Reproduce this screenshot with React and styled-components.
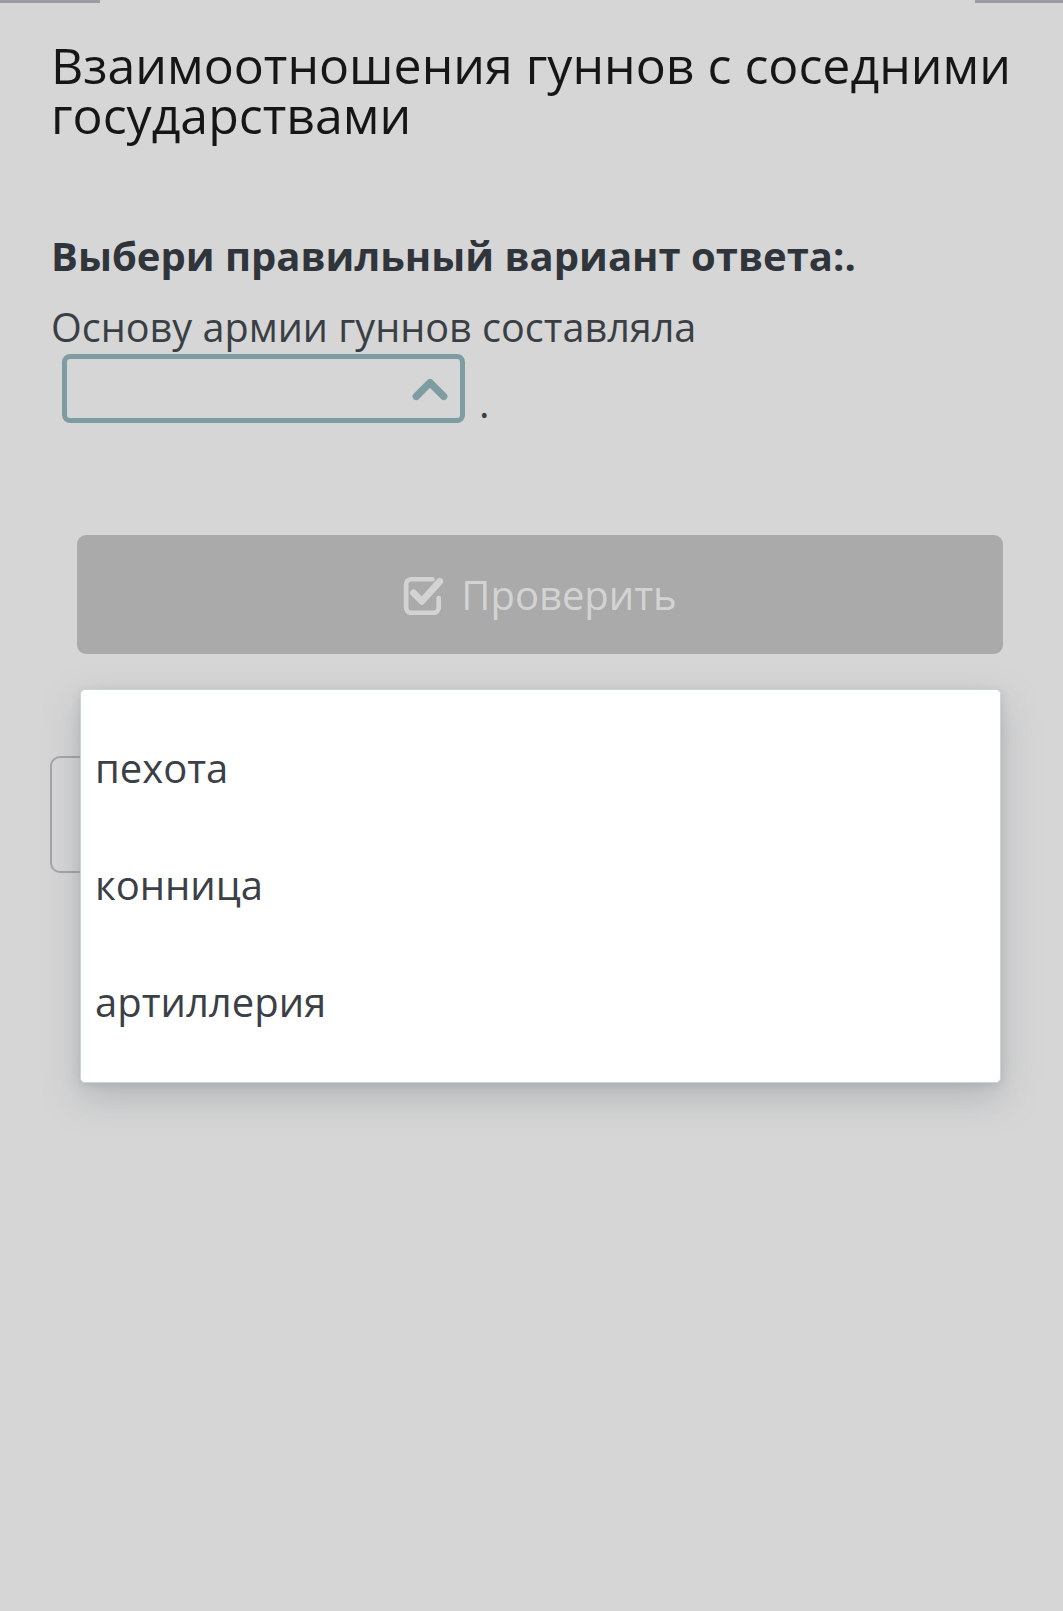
import React from "react";
import styled, { createGlobalStyle } from "styled-components";

const Global = createGlobalStyle`
  html, body { margin: 0; padding: 0; background: #d6d6d6; }
  body { font-family: "Open Sans", "Noto Sans", sans-serif; }
  * { box-sizing: border-box; }
`;

const Page = styled.div`
  position: relative;
  width: 1063px;
  min-height: 1611px;
  background: #d6d6d6;
  overflow: hidden;
`;

const TopStrip = styled.div`
  display: flex;
  justify-content: space-between;
  height: 3px;
`;

const StripPiece = styled.div`
  width: ${(p) => p.$w}px;
  height: 3px;
  background: #9c9ca4;
`;

const Content = styled.div`
  padding: 0 51px;
  display: flex;
  flex-direction: column;
`;

const Title = styled.h1`
  margin: 37px 0 0;
  font-weight: 400;
  font-size: 50px;
  line-height: 50px;
  color: #161616;
`;

const Prompt = styled.h2`
  margin: 91px 0 0;
  font-weight: 700;
  font-size: 40px;
  line-height: 50px;
  color: #30353b;
`;

const Sentence = styled.p`
  margin: 25px 0 0;
  font-size: 39.6px;
  line-height: 42px;
  color: #3a3f45;
`;

const SelectRow = styled.div`
  display: flex;
  align-items: flex-end;
  gap: 14px;
  margin-top: 6px;
  padding-left: 11px;
`;

const SelectBox = styled.div`
  width: 403px;
  height: 69px;
  border: 5px solid #7e9da2;
  border-radius: 8px;
  display: flex;
  align-items: center;
  justify-content: flex-end;
  padding-right: 11px;
`;

const Dot = styled.span`
  font-size: 40px;
  line-height: 40px;
  color: #3a3f45;
`;

const CheckButton = styled.div`
  margin: 112px 9px 0 26px;
  height: 119px;
  border-radius: 9px;
  background: #aaaaaa;
  display: flex;
  align-items: center;
  justify-content: center;
  gap: 16px;
  color: #d3d3d3;
  font-size: 40px;
`;

const SkipButton = styled.div`
  margin: 102px 0 0 -1px;
  width: 600px;
  height: 117px;
  border: 2px solid #a2a6a8;
  border-radius: 10px;
`;

const Menu = styled.div`
  position: absolute;
  left: 80px;
  top: 689px;
  width: 921px;
  height: 394px;
  background: #ffffff;
  border-radius: 5px;
  border: 1px solid #c9d6d9;
  box-shadow: 0 14px 36px rgba(110, 120, 125, 0.35), 0 2px 8px rgba(110, 120, 125, 0.2);
  padding-top: 38px;
  display: flex;
  flex-direction: column;
`;

const MenuItem = styled.div`
  height: 117px;
  padding-left: 14px;
  font-size: 40px;
  line-height: 80px;
  color: #3b4046;
`;

function ChevronUp() {
  return (
    <svg width="38" height="28" viewBox="0 0 36 26">
      <polyline
        points="5,20 18,7 31,20"
        fill="none"
        stroke="#7e9da2"
        strokeWidth="7"
        strokeLinecap="round"
        strokeLinejoin="round"
      />
    </svg>
  );
}

function CheckSquare() {
  return (
    <svg width="42" height="40" viewBox="0 0 40 38">
      <path
        d="M28 4 H8 a5 5 0 0 0 -5 5 V31 a5 5 0 0 0 5 5 H29 a5 5 0 0 0 5 -5 V22"
        fill="none"
        stroke="#d3d3d3"
        strokeWidth="4.5"
        strokeLinecap="round"
      />
      <polyline
        points="10,17 18,25 35,6"
        fill="none"
        stroke="#d3d3d3"
        strokeWidth="6.5"
        strokeLinecap="round"
        strokeLinejoin="round"
      />
    </svg>
  );
}

export default function App() {
  const options = ["пехота", "конница", "артиллерия"];
  return (
    <Page>
      <Global />
      <TopStrip>
        <StripPiece $w={100} />
        <StripPiece $w={88} />
      </TopStrip>
      <Content>
        <Title>Взаимоотношения гуннов с соседними государствами</Title>
        <Prompt>Выбери правильный вариант ответа:.</Prompt>
        <Sentence>Основу армии гуннов составляла</Sentence>
        <SelectRow>
          <SelectBox>
            <ChevronUp />
          </SelectBox>
          <Dot>.</Dot>
        </SelectRow>
        <CheckButton>
          <CheckSquare />
          <span>Проверить</span>
        </CheckButton>
        <SkipButton />
      </Content>
      <Menu>
        {options.map((o) => (
          <MenuItem key={o}>{o}</MenuItem>
        ))}
      </Menu>
    </Page>
  );
}
